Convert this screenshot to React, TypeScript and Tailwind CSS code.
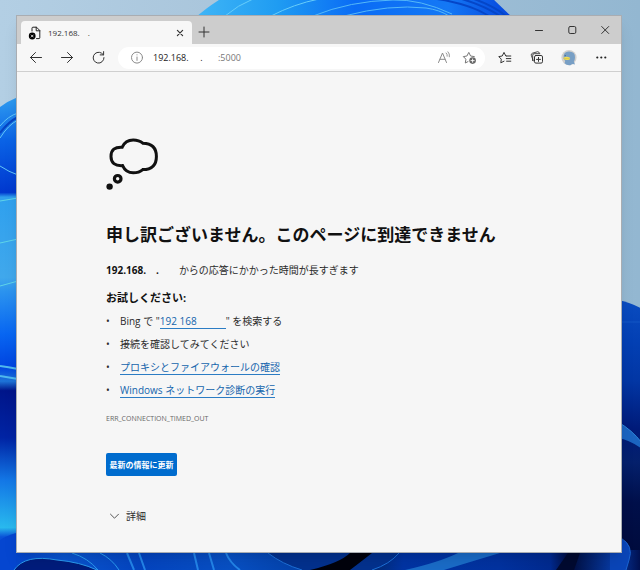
import { useState } from 'react';
import type { ReactNode } from 'react';

const FONT = "font-['Open_Sans','Noto_Sans_CJK_JP',sans-serif]";

function Wallpaper() {
  return (
    <svg
      className="absolute inset-0 h-full w-full"
      viewBox="0 0 640 570"
      preserveAspectRatio="none"
      fill="none"
      aria-hidden="true"
    >
      <defs>
        <linearGradient id="sky" x1="0" y1="0" x2="1" y2="0">
          <stop offset="0" stopColor="#b3cfe4" />
          <stop offset="0.4" stopColor="#a8c4da" />
          <stop offset="1" stopColor="#93b7d1" />
        </linearGradient>
        <linearGradient id="bloom" x1="200" y1="0" x2="510" y2="0" gradientUnits="userSpaceOnUse">
          <stop offset="0" stopColor="#3eb4f6" />
          <stop offset="0.25" stopColor="#1f9cf2" />
          <stop offset="0.5" stopColor="#0a6cf5" />
          <stop offset="0.8" stopColor="#1478f5" />
          <stop offset="1" stopColor="#0647dd" />
        </linearGradient>
        <linearGradient id="left" x1="0" y1="98" x2="0" y2="570" gradientUnits="userSpaceOnUse">
          <stop offset="0" stopColor="#2f9cf0" />
          <stop offset="0.09" stopColor="#0a63e6" />
          <stop offset="0.2" stopColor="#0038cf" />
          <stop offset="0.21" stopColor="#2fa0ee" />
          <stop offset="0.38" stopColor="#40a8ec" />
          <stop offset="0.41" stopColor="#2b93ef" />
          <stop offset="0.5" stopColor="#0866f2" />
          <stop offset="0.57" stopColor="#0044e0" />
          <stop offset="0.6" stopColor="#1e74d8" />
          <stop offset="0.62" stopColor="#00158a" />
          <stop offset="0.72" stopColor="#0024a4" />
          <stop offset="0.81" stopColor="#1377e6" />
          <stop offset="0.91" stopColor="#29b9ee" />
          <stop offset="0.93" stopColor="#0a52d8" />
          <stop offset="1" stopColor="#0337c0" />
        </linearGradient>
        <linearGradient id="right" x1="0" y1="300" x2="0" y2="570" gradientUnits="userSpaceOnUse">
          <stop offset="0" stopColor="#0a4cc0" />
          <stop offset="0.15" stopColor="#0340b4" />
          <stop offset="0.3" stopColor="#0236a4" />
          <stop offset="0.48" stopColor="#001a78" />
          <stop offset="0.6" stopColor="#04206c" />
          <stop offset="0.75" stopColor="#000f4a" />
          <stop offset="1" stopColor="#000a38" />
        </linearGradient>
        <linearGradient id="bottom" x1="0" y1="0" x2="640" y2="0" gradientUnits="userSpaceOnUse">
          <stop offset="0" stopColor="#0340cc" />
          <stop offset="0.1" stopColor="#0a55d0" />
          <stop offset="0.22" stopColor="#0444c0" />
          <stop offset="0.36" stopColor="#0850c4" />
          <stop offset="0.48" stopColor="#0340a8" />
          <stop offset="0.52" stopColor="#000414" />
          <stop offset="0.56" stopColor="#02245c" />
          <stop offset="0.63" stopColor="#0134a4" />
          <stop offset="0.78" stopColor="#0232a0" />
          <stop offset="0.86" stopColor="#012a90" />
          <stop offset="0.89" stopColor="#000c3c" />
          <stop offset="0.96" stopColor="#083ca8" />
          <stop offset="1" stopColor="#001050" />
        </linearGradient>
      </defs>
      <rect width="640" height="570" fill="url(#sky)" />

      {/* top petals */}
      <path d="M195 18Q206 8 222 -2H492L513 18Z" fill="url(#bloom)" />
      <path d="M225 16Q238 5 253 -1" stroke="#67cdfa" />
      <path d="M271 16Q294 4 319 -1" stroke="#67cdfa" />
      <path d="M313 16Q350 1 393 0Q420 -1 452 14" stroke="#54b8f8" />
      <path d="M344 16Q390 4 426 8Q440 10 449 16" stroke="#54b8f8" />
      <path d="M437 -1Q470 4 489 16M462 -1Q485 6 500 16M474 -1Q494 6 506 16" stroke="#0546c8" strokeWidth="2" />

      {/* left side */}
      <path d="M0 107Q8 101 18 97V553H0Z" fill="url(#left)" />
      <path d="M0 126Q8 116 18 113M0 138Q8 125 18 120M0 166Q9 172 18 175" stroke="#63c6f8" />
      <path d="M0 133Q8 122 18 117" stroke="#0645c4" strokeWidth="2" />
      <path d="M0 201L18 198M0 243L18 239M0 286L18 281" stroke="#5fd4e8" />
      <path d="M0 366Q8 367 18 369M0 376L18 379" stroke="#4fb8ee" strokeWidth="2" />

      {/* right side */}
      <path d="M618 300Q630 302 642 309V570H618Z" fill="url(#right)" />
      <path d="M618 322H640" stroke="#1256c4" />
      <path d="M618 422Q632 430 642 443V449Q630 440 618 438Z" fill="#1b64c0" />
      <path d="M618 422Q632 430 642 443" stroke="#2e86d8" />

      {/* bottom strip */}
      <path d="M0 550H640V570H0Z" fill="url(#bottom)" />
      <path d="M0 540Q6 536 16 533V570H0Z" fill="#0546d0" />
      <path d="M14 570Q25 554 57 560Q80 562 97 570Z" fill="#001c7c" />
      <path d="M14 570Q25 554 57 560Q80 562 97 570M72 553Q88 558 98 570M100 553Q112 559 119 570" stroke="#2b9cf0" />
      <path d="M127 553L134 570M139 553L145 570M194 553L198 570M209 553L214 570M226 553Q230 563 240 570" stroke="#2385ea" strokeWidth="2" />
      <path d="M268 553Q282 564 302 570H372Q390 564 399 553Z" fill="#03318e" />
      <path d="M310 570Q340 563 350 553H372Q358 564 350 570Z" fill="#00020c" />
      <path d="M268 553Q282 564 302 570M372 570Q390 564 399 553" stroke="#1d70d8" />
      <path d="M405 570Q440 562 458 553H500Q470 562 444 570Z" fill="#1a6cc8" />
      <path d="M556 570L568 553H580L574 570Z" fill="#000a30" />
      <path d="M618 538Q634 542 629 560L626 570H610V553H618Z" fill="#0a45b8" />
      <path d="M621 538Q634 546 629 560L626 570" stroke="#1b64d0" />
    </svg>
  );
}

type IconProps = { children: ReactNode; className?: string };

function Icon({ children, className = 'h-4 w-4' }: IconProps) {
  return (
    <svg
      className={className}
      viewBox="0 0 16 16"
      fill="none"
      stroke="currentColor"
      strokeLinecap="round"
      strokeLinejoin="round"
      aria-hidden="true"
    >
      {children}
    </svg>
  );
}

function ToolButton({ label, children }: { label: string; children: ReactNode }) {
  return (
    <button type="button" aria-label={label} className="block h-4 w-4 shrink-0 text-[#333333]">
      {children}
    </button>
  );
}

function TitleBar() {
  return (
    <div className="flex h-7 items-end bg-[#cdcdcd] pl-1 text-[#333333]">
      <div className="flex h-[23px] w-[171px] items-center rounded-t bg-[#f7f7f7] pl-1.5 pr-1">
        <Icon>
          <path d="M5 6V3.2Q5 2.2 6 2.2H9.5L12.8 5.5V12.8Q12.8 13.6 12 13.6H9.5" stroke="#222222" />
          <path d="M9.2 2.2V5.8H12.8" stroke="#222222" />
          <circle cx="5.2" cy="11" r="3.4" fill="#000000" stroke="none" />
          <path d="M4.2 10L6.2 12M6.2 10L4.2 12" stroke="#ffffff" strokeWidth="0.8" />
        </Icon>
        <span className="ml-[5px] flex-1 whitespace-pre text-[8px] leading-4">
          192.168.<span className="ml-2">.</span>
        </span>
        <button type="button" aria-label="タブを閉じる" className="h-4 w-4">
          <Icon>
            <path d="M5.4 5.4L10.6 10.6M10.6 5.4L5.4 10.6" strokeWidth="1.2" />
          </Icon>
        </button>
      </div>
      <button type="button" aria-label="新しいタブ" className="mb-1 ml-1 h-4 w-4">
        <Icon>
          <path d="M8 3V13M3 8H13" />
        </Icon>
      </button>
      <div className="mb-1.5 ml-auto mr-2 flex gap-[17px]">
        <ToolButton label="最小化">
          <Icon>
            <path d="M4.5 8.5H11.5" />
          </Icon>
        </ToolButton>
        <ToolButton label="最大化">
          <Icon>
            <rect x="4.8" y="4.5" width="7" height="7" rx="1.4" />
          </Icon>
        </ToolButton>
        <ToolButton label="閉じる">
          <Icon>
            <path d="M4.7 4.5L11.7 11.5M11.7 4.5L4.7 11.5" />
          </Icon>
        </ToolButton>
      </div>
    </div>
  );
}

function Toolbar() {
  const [url, setUrl] = useState('192.168.\u00a0\u00a0\u00a0\u00a0\u00a0.');

  return (
    <div className="flex h-7 items-center border-b border-[#cfcfcf] bg-[#f7f7f7] pl-[11px] pr-3">
      <div className="flex gap-[15px]">
        <ToolButton label="戻る">
          <Icon>
            <path d="M13.5 7.5H2.5M7.5 2.5L2.5 7.5L7.5 12.5" />
          </Icon>
        </ToolButton>
        <ToolButton label="進む">
          <Icon>
            <path d="M2.5 7.5H13.5M8.5 2.5L13.5 7.5L8.5 12.5" />
          </Icon>
        </ToolButton>
        <ToolButton label="更新">
          <Icon>
            <path d="M14 7.6A5.4 5.4 0 1 1 11.6 3.2L13.4 4.8M13.6 1.6V4.9H10.2" />
          </Icon>
        </ToolButton>
      </div>

      <div className="mx-3 flex h-[22px] min-w-0 flex-1 items-center rounded-full bg-white px-[11px] text-[9px]">
        <Icon className="h-4 w-4 shrink-0 text-[#8a8a8a]">
          <circle cx="8" cy="7.6" r="5.5" />
          <path d="M8 7V10.4M8 4.8V4.9" />
        </Icon>
        <input
          aria-label="アドレス"
          value={url}
          onChange={(e) => setUrl(e.target.value)}
          className="ml-2 h-4 w-[65px] text-[#222222] outline-none"
        />
        <span className="flex-1 text-[#777777]">:5000</span>
        <button type="button" aria-label="音声で読み上げる" className="mr-2.5 h-4 w-4 text-[#8a8a8a]">
          <Icon>
            <path d="M2.5 12.5L6.5 3L10.5 12.5M4 9.3H9" />
            <path d="M10.2 3Q11.6 4.2 11.2 6.2M12 1.8Q14 3.8 13.4 6.8" strokeWidth="0.9" />
          </Icon>
        </button>
        <button type="button" aria-label="お気に入りに追加" className="-mr-1 h-4 w-4 text-[#777777]">
          <Icon>
            <path d="M6 11.6L3.3 13L3.9 9.2L1.3 6.6L4.9 6L6.8 2.4L8.6 6L12.3 6.6" />
            <circle cx="10.6" cy="10.6" r="3.3" fill="#666666" stroke="none" />
            <path d="M10.6 9V12.2M9 10.6H12.2" stroke="#ffffff" strokeWidth="0.9" />
          </Icon>
        </button>
      </div>

      <div className="flex gap-4">
        <ToolButton label="お気に入り">
          <Icon>
            <path d="M9.3 6H8.8L7 2.4L5.2 6L1.8 6.6L4.3 9.2L3.8 12.8L7 11.2" />
            <path d="M9.6 6H13.8M9.3 8.6H13.8M9.6 11.2H13.8" />
          </Icon>
        </ToolButton>
        <ToolButton label="コレクション">
          <Icon>
            <rect x="5.5" y="5.5" width="8" height="7.6" rx="1.4" />
            <path d="M9.5 7.4V11.4M7.5 9.4H11.5" />
            <path d="M4.3 10.9L2.3 5.3Q1.9 3.9 3.2 3.3L8.6 1.7Q9.8 1.4 10.3 2.9M3.7 10.6V5.2Q3.7 3.7 5.2 3.7H10.8" strokeWidth="0.9" />
          </Icon>
        </ToolButton>
        <ToolButton label="プロフィール">
          <Icon>
            <circle cx="8" cy="7.6" r="7.6" fill="#d2d0ce" stroke="none" />
            <path d="M2.6 7.8Q2.2 1.6 8 1.6Q14.4 1.6 14 7.8Q13.8 10.8 12.8 11.6L14 14.6Q11 13.4 9.6 15.2Q6 15.8 3.6 13.2L4.2 11Q2.8 9.8 2.6 7.8Z" fill="#789fc5" stroke="none" />
            <path d="M2.8 7.4Q5.6 6.2 8.6 7.4Q9.6 8.4 8.6 9.4Q6 10.4 3 9.6Q1.8 8.4 2.8 7.4Z" fill="#f1df55" stroke="none" />
            <path d="M2.8 8.6H8.4" stroke="#c9b544" strokeWidth="0.5" />
            <circle cx="4.2" cy="5.6" r="0.6" fill="#3b5878" stroke="none" />
          </Icon>
        </ToolButton>
        <ToolButton label="設定など">
          <Icon>
            <g fill="#222222" stroke="none">
              <circle cx="4.3" cy="7.5" r="1.1" />
              <circle cx="8.3" cy="7.5" r="1.1" />
              <circle cx="12.3" cy="7.5" r="1.1" />
            </g>
          </Icon>
        </ToolButton>
      </div>
    </div>
  );
}

function ThoughtBubble() {
  return (
    <svg className="h-[52px] w-[52px]" viewBox="0 0 52 52" fill="none" stroke="#111111" strokeWidth="3" aria-hidden="true">
      <path d="M16.2 9.2Q19.4 2 27.2 2Q33 2 36.8 5.2Q50.4 5.4 50.4 18.4Q50.4 31.4 36.8 31.6Q33 34.8 27.2 34.8Q19.8 34.8 16.6 27.6Q5 28.2 5 18.4Q5 8.6 16.2 9.2Z" />
      <circle cx="11.7" cy="40.8" r="3.3" strokeWidth="3.2" />
      <circle cx="3.6" cy="48.6" r="3.2" fill="#111111" stroke="none" />
    </svg>
  );
}

const LINK = 'border-b border-[#2b7cc4] leading-[13px] text-[#1464ac]';

const suggestions: { id: string; body: ReactNode }[] = [
  {
    id: 'search',
    body: (
      <>
        Bing で "
        <a href="#search" className={`inline-block w-[66px] ${LINK}`}>
          192 168
        </a>
        " を検索する
      </>
    ),
  },
  { id: 'connection', body: '接続を確認してみてください' },
  {
    id: 'proxy',
    body: (
      <a href="#proxy" className={`inline-block ${LINK}`}>
        プロキシとファイアウォールの確認
      </a>
    ),
  },
  {
    id: 'diagnostics',
    body: (
      <a href="#diagnostics" className={`inline-block ${LINK}`}>
        Windows ネットワーク診断の実行
      </a>
    ),
  },
];

function ErrorPage() {
  const [open, setOpen] = useState(false);

  return (
    <main className="flex flex-1 flex-col items-start bg-[#f6f6f6] pl-[89px] pt-[66px] text-[10px] text-[#2b2b2b]">
      <ThoughtBubble />
      <h1 className="mt-[33px] text-[17px] font-bold leading-6 text-[#111111]">
        申し訳ございません。このページに到達できません
      </h1>
      <p className="mt-[15px] leading-4">
        <strong className="font-bold text-[#111111]">
          192.168.<span className="ml-2.5">.</span>
        </strong>
        <span className="ml-5">からの応答にかかった時間が長すぎます</span>
      </p>
      <h2 className="mt-3 text-[11px] font-bold leading-4 text-[#111111]">お試しください:</h2>
      <ul className="mt-1">
        {suggestions.map((item) => (
          <li key={item.id} className="flex h-[23px] items-center">
            <span className="w-3.5">•</span>
            <span>{item.body}</span>
          </li>
        ))}
      </ul>
      <p className="mt-[11px] text-[7px] leading-3 text-[#666666]">ERR_CONNECTION_TIMED_OUT</p>
      <button
        type="button"
        className="mt-7 h-[23px] w-[71px] rounded-[2px] bg-[#006cce] text-[8px] font-bold text-white"
      >
        最新の情報に更新
      </button>
      <button
        type="button"
        aria-expanded={open}
        onClick={() => setOpen(!open)}
        className="mt-8 flex items-center leading-4"
      >
        <Icon className="h-4 w-4 text-[#555555]">
          <path d="M4.5 6.2L8.5 10.2L12.5 6.2" />
        </Icon>
        <span className="ml-1">詳細</span>
      </button>
    </main>
  );
}

export default function App() {
  return (
    <div lang="ja" className={`relative flex min-h-screen pb-[17px] pl-4 pr-[18px] pt-[15px] ${FONT}`}>
      <Wallpaper />
      <div className="relative flex min-w-0 flex-1 flex-col border border-[#a9adb2] bg-[#f6f6f6] shadow-lg">
        <TitleBar />
        <Toolbar />
        <ErrorPage />
      </div>
    </div>
  );
}
